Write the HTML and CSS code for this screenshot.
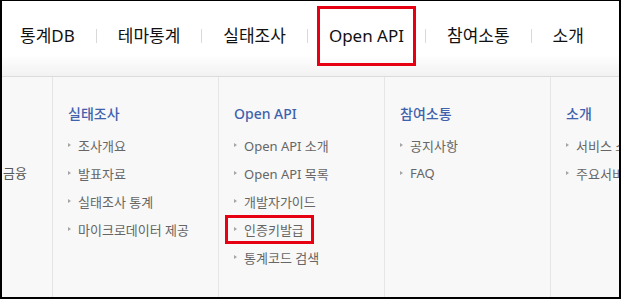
FILE: index.html
```html
<!DOCTYPE html>
<html lang="ko">
<head>
    <meta charset="UTF-8">
    <meta name="viewport" content="width=device-width, initial-scale=1.0">
    <title>Open API 메뉴</title>
    <link rel="stylesheet" href="styles.css">
</head>
<body>
    <div class="frame">
        <!-- Top navigation -->
        <nav class="gnb">
            <ul class="gnb-list">
                <li><a href="#">통계DB</a></li>
                <li><a href="#">테마통계</a></li>
                <li><a href="#">실태조사</a></li>
                <li><a href="#"><span class="mark mark-nav">Open API</span></a></li>
                <li><a href="#">참여소통</a></li>
                <li><a href="#">소개</a></li>
            </ul>
        </nav>

        <!-- Dropdown panel -->
        <div class="sub-panel">
            <div class="sub-col sub-col-cut">
                <ul class="sub-list">
                    <li></li>
                    <li>금융</li>
                </ul>
            </div>
            <div class="sub-col">
                <h3>실태조사</h3>
                <ul class="sub-list">
                    <li><a href="#">조사개요</a></li>
                    <li><a href="#">발표자료</a></li>
                    <li><a href="#">실태조사 통계</a></li>
                    <li><a href="#">마이크로데이터 제공</a></li>
                </ul>
            </div>
            <div class="sub-col">
                <h3>Open API</h3>
                <ul class="sub-list">
                    <li><a href="#">Open API 소개</a></li>
                    <li><a href="#">Open API 목록</a></li>
                    <li><a href="#">개발자가이드</a></li>
                    <li><a href="#" class="mark mark-item">인증키발급</a></li>
                    <li><a href="#">통계코드 검색</a></li>
                </ul>
            </div>
            <div class="sub-col">
                <h3>참여소통</h3>
                <ul class="sub-list">
                    <li><a href="#">공지사항</a></li>
                    <li><a href="#">FAQ</a></li>
                </ul>
            </div>
            <div class="sub-col sub-col-last">
                <h3>소개</h3>
                <ul class="sub-list">
                    <li><a href="#">서비스 소개</a></li>
                    <li><a href="#">주요서비스</a></li>
                </ul>
            </div>
        </div>
    </div>
</body>
</html>
```

FILE: styles.css
```css
/* Reset */
* {
    margin: 0;
    padding: 0;
    box-sizing: border-box;
}

ul {
    list-style: none;
}

a {
    color: inherit;
    text-decoration: none;
}

body {
    font-family: "Noto Sans", "Noto Sans CJK KR", sans-serif;
    background: #fff;
}

/* Outer frame of the capture */
.frame {
    width: 621px;
    height: 299px;
    border-top: 1px solid #000;
    border-left: 2px solid #000;
    border-right: 2px solid #000;
    border-bottom: 2px solid #000;
    overflow: hidden;
    display: flex;
    flex-direction: column;
}

/* Top navigation */
.gnb {
    height: 76px;
    border-bottom: 1px solid #dcdcdc;
    background: linear-gradient(#fff 72%, #f2f2f2);
    flex-shrink: 0;
}

.gnb-list {
    display: flex;
    align-items: center;
    height: 100%;
    padding-left: 18px;
    padding-bottom: 6px;
}

.gnb-list li {
    display: flex;
    align-items: center;
}

.gnb-list li + li::before {
    content: '';
    width: 1px;
    height: 14px;
    background: #d9d9d9;
}

.gnb-list a {
    display: block;
    padding: 0 21px;
    font-size: 17px;
    line-height: 20px;
    font-weight: 400;
    color: #111;
}

.gnb-list li:first-child a {
    padding-left: 0;
}

/* Red highlight boxes */
.mark {
    position: relative;
}

.mark::after {
    content: '';
    position: absolute;
    border: 3px solid #e60012;
}

.mark-nav::after {
    top: -18px;
    bottom: -19px;
    left: -12px;
    right: -12px;
}

.mark-item::after {
    top: 0;
    bottom: -1px;
    left: -9px;
    right: -10px;
}

/* Dropdown panel */
.sub-panel {
    flex: 1;
    display: flex;
    background: #f8f8f8;
}

.sub-col {
    width: 166px;
    flex-shrink: 0;
    border-right: 1px solid #e6e6e6;
    padding: 27px 0 0 15px;
}

.sub-col-cut {
    width: 51px;
    padding-left: 1px;
    padding-top: 54px;
}

.sub-col-cut li {
    height: 28px;
    line-height: 28px;
    font-size: 13px;
    color: #555;
}

.sub-col-last {
    border-right: none;
    white-space: nowrap;
}

.sub-col h3 {
    font-size: 14px;
    line-height: 20px;
    font-weight: 500;
    color: #3f62ad;
    margin-bottom: 7px;
}

.sub-list li {
    height: 28px;
    display: flex;
    align-items: center;
}

.sub-list a {
    display: flex;
    align-items: center;
    height: 28px;
    font-size: 13px;
    color: #666;
}

.sub-list a::before {
    content: '';
    border-left: 3px solid #a5a5a5;
    border-top: 2.5px solid transparent;
    border-bottom: 2.5px solid transparent;
    margin-right: 7px;
}
```
